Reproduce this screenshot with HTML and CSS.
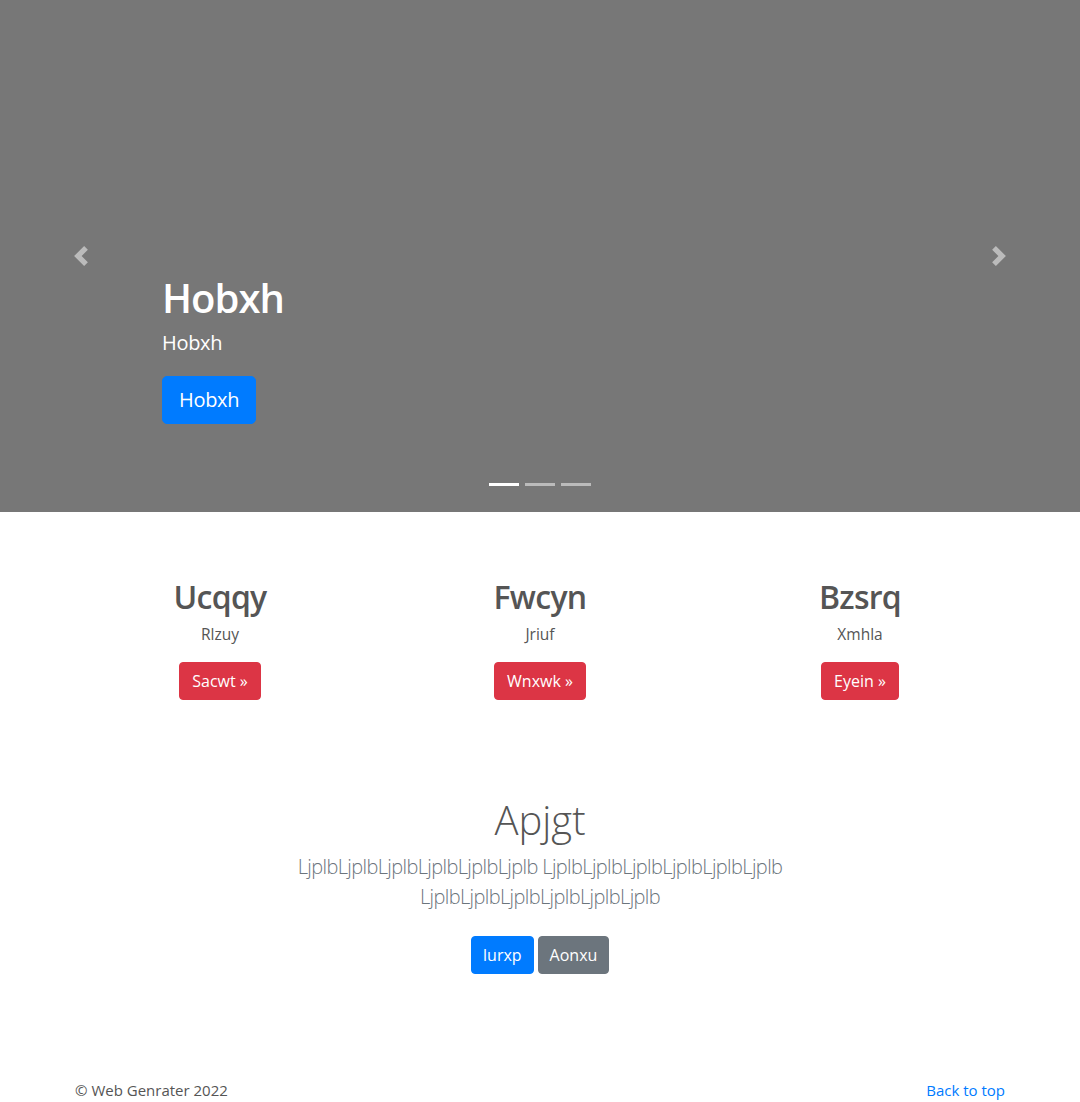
FILE: index.html
```html
<!DOCTYPE html>
<html lang="en">
<head>
<meta charset="utf-8">
<title>Carousel</title>
<link rel="stylesheet" href="styles.css">
</head>
<body>
<main>
  <div class="carousel">
    <div class="slide">
      <div class="caption">
        <h1 class="caption-title">Hobxh</h1>
        <p class="caption-sub">Hobxh</p>
        <div class="btn-row"><a class="btn btn-lg btn-primary" href="#">Hobxh</a></div>
      </div>
    </div>
    <ol class="indicators">
      <li class="active"></li>
      <li></li>
      <li></li>
    </ol>
    <a class="control control-prev" href="#">
      <svg class="control-icon" viewBox="0 0 8 8" width="20" height="20"><path fill="#fff" d="M5.25 0l-4 4 4 4 1.5-1.5-2.5-2.5 2.5-2.5-1.5-1.5z"/></svg>
    </a>
    <a class="control control-next" href="#">
      <svg class="control-icon" viewBox="0 0 8 8" width="20" height="20"><path fill="#fff" d="M2.75 0l-1.5 1.5 2.5 2.5-2.5 2.5 1.5 1.5 4-4-4-4z"/></svg>
    </a>
  </div>

  <div class="container marketing">
    <div class="col">
      <h2 class="col-title">Ucqqy</h2>
      <p class="col-text">Rlzuy</p>
      <div class="btn-row"><a class="btn btn-danger" href="#">Sacwt &raquo;</a></div>
    </div>
    <div class="col">
      <h2 class="col-title">Fwcyn</h2>
      <p class="col-text">Jriuf</p>
      <div class="btn-row"><a class="btn btn-danger" href="#">Wnxwk &raquo;</a></div>
    </div>
    <div class="col">
      <h2 class="col-title">Bzsrq</h2>
      <p class="col-text">Xmhla</p>
      <div class="btn-row"><a class="btn btn-danger" href="#">Eyein &raquo;</a></div>
    </div>
  </div>

  <section class="jumbo">
    <h1 class="jumbo-title">Apjgt</h1>
    <p class="lead">LjplbLjplbLjplbLjplbLjplbLjplb LjplbLjplbLjplbLjplbLjplbLjplb LjplbLjplbLjplbLjplbLjplbLjplb</p>
    <div class="btn-row btn-row-center">
      <a class="btn btn-primary" href="#">Iurxp</a>
      <a class="btn btn-secondary" href="#">Aonxu</a>
    </div>
  </section>

  <footer class="container footer">
    <p class="footer-copy">&copy; Web Genrater 2022</p>
    <a class="footer-link" href="#">Back to top</a>
  </footer>
</main>
</body>
</html>
```

FILE: styles.css
```css
* {
  box-sizing: border-box;
}

html, body {
  margin: 0;
  padding: 0;
}

body {
  font-family: "Open Sans", "Noto Sans", sans-serif;
  font-size: 16px;
  line-height: 1.5;
  color: #555;
  background: #fff;
}

a {
  text-decoration: none;
}

/* Carousel */
.carousel {
  position: relative;
  height: 512px;
  margin-bottom: 66px;
  background: #777;
  overflow: hidden;
}

.slide {
  height: 100%;
}

.caption {
  position: absolute;
  left: 15%;
  right: 15%;
  bottom: 48px;
  padding: 20px 0;
  color: #fff;
  text-align: left;
  z-index: 10;
}

.caption-title {
  margin: 0 0 6px;
  font-size: 40px;
  line-height: 48px;
  font-weight: 600;
  letter-spacing: -1px;
}

.caption-sub {
  margin: 0 0 18px;
  font-size: 20px;
  line-height: 30px;
  letter-spacing: -0.3px;
}

.caption .btn-row {
  margin-bottom: 20px;
}

.indicators {
  position: absolute;
  left: 15%;
  right: 15%;
  bottom: 0;
  margin: 0 0 16px;
  padding: 0;
  list-style: none;
  display: flex;
  justify-content: center;
  z-index: 15;
}

.indicators li {
  width: 30px;
  height: 23px;
  margin: 0 3px;
  border-top: 10px solid transparent;
  border-bottom: 10px solid transparent;
  background-color: #fff;
  background-clip: padding-box;
  opacity: 0.5;
}

.indicators li.active {
  opacity: 1;
}

.control {
  position: absolute;
  top: 0;
  bottom: 0;
  width: 15%;
  display: flex;
  align-items: center;
  justify-content: center;
  opacity: 0.5;
}

.control-prev {
  left: 0;
}

.control-next {
  right: 0;
}

.control-icon {
  display: block;
  width: 20px;
  height: 20px;
}

/* Buttons */
.btn-row {
  display: flex;
}

.btn-row-center {
  justify-content: center;
  gap: 4px;
}

.btn {
  display: inline-block;
  padding: 6px 12px;
  font-size: 16px;
  line-height: 24px;
  border: 1px solid transparent;
  border-radius: 4px;
  color: #fff;
  text-align: center;
}

.btn-lg {
  padding: 8px 16px;
  font-size: 20px;
  line-height: 30px;
  border-radius: 5px;
  letter-spacing: -0.3px;
}

.btn-primary {
  background: #007bff;
  border-color: #007bff;
}

.btn-danger {
  background: #dc3545;
  border-color: #dc3545;
}

.btn-secondary {
  background: #6c757d;
  border-color: #6c757d;
}

/* Marketing */
.container {
  width: 960px;
  margin: 0 auto;
}

.marketing {
  display: grid;
  grid-template-columns: repeat(3, 1fr);
}

.col {
  padding: 0 15px;
  margin-bottom: 24px;
  text-align: center;
}

.col .btn-row {
  justify-content: center;
  margin-bottom: 16px;
}

.col-title {
  margin: 0 0 6px;
  font-size: 32px;
  line-height: 38px;
  font-weight: 600;
  letter-spacing: -0.7px;
}

.col-text {
  margin: 0 12px 16px;
  font-size: 15.5px;
  line-height: 24px;
}

/* Jumbo */
.jumbo {
  padding: 56px 0 48px;
  text-align: center;
}

.jumbo-title {
  margin: 0 0 8px;
  font-size: 40px;
  line-height: 48px;
  font-weight: 300;
  color: #555;
}

.lead {
  max-width: 600px;
  margin: 0 auto 24px;
  font-size: 20px;
  line-height: 30px;
  font-weight: 300;
  letter-spacing: -0.62px;
  color: #6c757d;
}

.jumbo .btn-row {
  margin: 0 0 8px;
}

.jumbo .btn {
  padding: 6px 11px;
}

/* Footer */
.footer {
  display: flex;
  justify-content: space-between;
  padding: 48px 15px 0;
}

.footer-copy {
  margin: 0 0 16px;
  font-size: 15px;
  line-height: 24px;
}

.footer-link {
  font-size: 15px;
  line-height: 24px;
  color: #007bff;
}
```
